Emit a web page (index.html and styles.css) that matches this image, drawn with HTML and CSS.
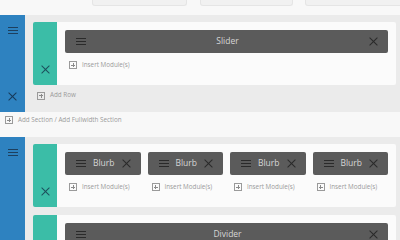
FILE: index.html
```html
<!DOCTYPE html>
<html>
<head>
<meta charset="utf-8">
<link rel="stylesheet" href="styles.css">
</head>
<body>
<div class="topstrip">
  <div class="tbox tb1"></div>
  <div class="tbox tb2"></div>
  <div class="tbox tb3"></div>
</div>

<div class="section s1">
  <div class="sbar">
    <span class="ham ham-light"><i></i><i></i><i></i></span>
    <span class="x x-dark"></span>
  </div>
  <div class="scontent">
    <div class="row">
      <div class="rbar"><span class="x x-dark"></span></div>
      <div class="rpanel">
        <div class="col">
          <div class="module">
            <span class="ham"><i></i><i></i><i></i></span>
            <span class="mtitle">Slider</span>
            <span class="x"></span>
          </div>
          <div class="insert"><span class="plus"></span>Insert Module(s)</div>
        </div>
      </div>
    </div>
    <div class="addrow"><span class="plus"></span>Add Row</div>
  </div>
</div>

<div class="addsection"><span class="plus"></span>Add Section / Add Fullwidth Section</div>

<div class="section s2">
  <div class="sbar">
    <span class="ham ham-light"><i></i><i></i><i></i></span>
  </div>
  <div class="scontent">
    <div class="row">
      <div class="rbar"><span class="x x-dark"></span></div>
      <div class="rpanel cols4">
        <div class="col">
          <div class="module"><span class="ham"><i></i><i></i><i></i></span><span class="mtitle">Blurb</span><span class="x"></span></div>
          <div class="insert"><span class="plus"></span>Insert Module(s)</div>
        </div>
        <div class="col">
          <div class="module"><span class="ham"><i></i><i></i><i></i></span><span class="mtitle">Blurb</span><span class="x"></span></div>
          <div class="insert"><span class="plus"></span>Insert Module(s)</div>
        </div>
        <div class="col">
          <div class="module"><span class="ham"><i></i><i></i><i></i></span><span class="mtitle">Blurb</span><span class="x"></span></div>
          <div class="insert"><span class="plus"></span>Insert Module(s)</div>
        </div>
        <div class="col">
          <div class="module"><span class="ham"><i></i><i></i><i></i></span><span class="mtitle">Blurb</span><span class="x"></span></div>
          <div class="insert"><span class="plus"></span>Insert Module(s)</div>
        </div>
      </div>
    </div>
    <div class="row">
      <div class="rbar"></div>
      <div class="rpanel">
        <div class="col">
          <div class="module">
            <span class="ham"><i></i><i></i><i></i></span>
            <span class="mtitle">Divider</span>
            <span class="x"></span>
          </div>
        </div>
      </div>
    </div>
  </div>
</div>
</body>
</html>
```
FILE: styles.css
```css
* { box-sizing: border-box; }
html, body { margin: 0; padding: 0; }
body {
  width: 400px;
  height: 240px;
  overflow: hidden;
  background: #f8f8f8;
  font-family: "Open Sans", "Liberation Sans", sans-serif;
}
.topstrip {
  height: 15px;
  display: flex;
  align-items: flex-start;
}
.tbox {
  height: 6px;
  background: #f1f1f1;
  border: 1px solid #e5e5e5;
  border-top: none;
  border-radius: 0 0 3px 3px;
}
.tb1 { margin-left: 92px; width: 95px; }
.tb2 { margin-left: 13px; width: 93px; }
.tb3 { margin-left: 12px; flex: 1; margin-right: -4px; }

.section {
  display: flex;
  background: #ebebeb;
}
.s1 { height: 97px; }
.s2 { height: 120px; }
.sbar {
  width: 25px;
  flex: none;
  background: #2e82c0;
  display: flex;
  flex-direction: column;
  align-items: center;
  padding-top: 12px;
  padding-bottom: 11px;
  justify-content: space-between;
}
.s2 .sbar { justify-content: flex-start; }
.scontent {
  flex: 1;
  padding: 7px 4px 0 8px;
  display: flex;
  flex-direction: column;
}
.row {
  display: flex;
  height: 63px;
  flex: none;
  margin-bottom: 8px;
}
.s1 .row { margin-bottom: 0; }
.rbar {
  width: 24px;
  flex: none;
  background: #3bbda7;
  border-radius: 2px 0 0 2px;
  display: flex;
  flex-direction: column;
  justify-content: flex-end;
  align-items: center;
  padding-bottom: 11px;
}
.rpanel {
  flex: 1;
  background: #fbfbfb;
  border-radius: 0 2px 2px 0;
  padding: 8px 8px 0 8px;
  display: flex;
  gap: 7px;
}
.col { flex: 1; min-width: 0; }
.module {
  height: 23px;
  background: #5b5b5b;
  border-radius: 2px;
  display: flex;
  align-items: center;
  padding: 0 10px 0 11px;
  position: relative;
}
.mtitle {
  flex: 1;
  text-align: center;
  color: #d6d6d6;
  font-size: 8.5px;
  font-weight: 400;
  line-height: 1;
}
.ham {
  display: flex;
  flex-direction: column;
  gap: 2px;
  width: 10px;
  flex: none;
}
.ham i {
  display: block;
  height: 1px;
  background: #2a2a2a;
}
.ham-light { width: 10px; }
.ham-light i { background: #1d3f5e; height: 1px; }
.x {
  width: 9px;
  height: 9px;
  flex: none;
  position: relative;
}
.x::before, .x::after {
  content: "";
  position: absolute;
  left: -1px;
  top: 4px;
  width: 11px;
  height: 1px;
  background: #2a2a2a;
  transform: rotate(45deg);
}
.x::after { transform: rotate(-45deg); }
.x-dark::before, .x-dark::after { background: #1d4f5c; }
.sbar .x-dark::before, .sbar .x-dark::after { background: #173a58; }

.insert, .addrow, .addsection {
  display: flex;
  align-items: center;
  font-size: 6.3px;
  color: #9a9a9a;
  line-height: 1;
}
.insert { margin-top: 8px; padding-left: 4px; }
.addrow { height: 27px; padding-left: 4px; padding-bottom: 6px; }
.addsection { height: 25px; padding-left: 5px; padding-bottom: 9px; background: #f8f8f8; }
.plus {
  width: 8px;
  height: 8px;
  border: 1px solid #9a9a9a;
  margin-right: 5px;
  position: relative;
  flex: none;
}
.plus::before, .plus::after {
  content: "";
  position: absolute;
  background: #8a8a8a;
}
.plus::before { left: 1px; right: 1px; top: 2.5px; height: 1px; }
.plus::after { top: 1px; bottom: 1px; left: 2.5px; width: 1px; }
```
